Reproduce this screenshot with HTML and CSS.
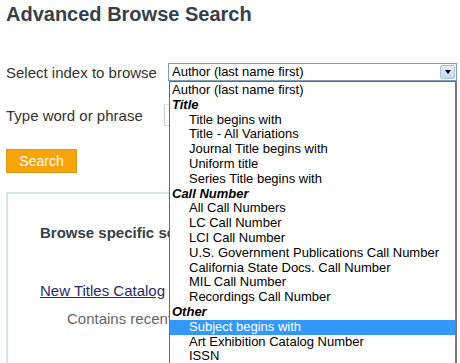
FILE: index.html
```html
<!DOCTYPE html>
<html lang="en">
<head>
    <meta charset="UTF-8">
    <title>Advanced Browse Search</title>
    <link rel="stylesheet" href="styles.css">
</head>
<body>
    <div class="page">
        <h1 class="page-title">Advanced Browse Search</h1>

        <form class="browse-form">
            <div class="form-row row-index">
                <label class="form-label">Select index to browse</label>
                <div class="select">
                    <div class="select-value">Author (last name first)</div>
                    <div class="select-arrow"><span></span></div>

                    <!-- Lista aberta do select -->
                    <ul class="select-list">
                        <li class="opt top">Author (last name first)</li>
                        <li class="group">Title</li>
                        <li class="opt">Title begins with</li>
                        <li class="opt">Title - All Variations</li>
                        <li class="opt">Journal Title begins with</li>
                        <li class="opt">Uniform title</li>
                        <li class="opt">Series Title begins with</li>
                        <li class="group">Call Number</li>
                        <li class="opt">All Call Numbers</li>
                        <li class="opt">LC Call Number</li>
                        <li class="opt">LCI Call Number</li>
                        <li class="opt">U.S. Government Publications Call Number</li>
                        <li class="opt">California State Docs. Call Number</li>
                        <li class="opt">MIL Call Number</li>
                        <li class="opt">Recordings Call Number</li>
                        <li class="group">Other</li>
                        <li class="opt selected">Subject begins with</li>
                        <li class="opt">Art Exhibition Catalog Number</li>
                        <li class="opt">ISSN</li>
                    </ul>
                </div>
            </div>

            <div class="form-row row-phrase">
                <label class="form-label">Type word or phrase</label>
                <input type="text" class="phrase-input">
            </div>

            <button type="button" class="search-btn">Search</button>
        </form>

        <div class="browse-box">
            <h2 class="box-title">Browse specific sets</h2>
            <a href="#" class="box-link">New Titles Catalog</a>
            <p class="box-desc">Contains recent titles</p>
        </div>
    </div>
</body>
</html>
```

FILE: styles.css
```css
body {
    margin: 0;
    padding: 0;
    font-family: 'Liberation Sans', Arial, sans-serif;
    color: #333;
    background: #fff;
    overflow: hidden;
}
.page {
    padding-left: 6px;
}
.page-title {
    margin: 2px 0 0;
    font-size: 20px;
    line-height: 24px;
    font-weight: bold;
    color: #36404c;
}
.browse-form {
    margin-top: 37px;
}
.form-row {
    display: flex;
    align-items: center;
}
.form-label {
    width: 162px;
    font-size: 15px;
    color: #333;
}
.row-phrase {
    margin-top: 23px;
}
.row-phrase .form-label {
    width: 158px;
}
.select {
    position: relative;
    width: 287px;
    height: 16px;
    border: 1px solid #7f9db9;
    background: #fff;
    display: flex;
    font-size: 13px;
}
.select-value {
    flex: 1;
    line-height: 16px;
    padding-left: 3px;
    color: #000;
}
.select-arrow {
    width: 15px;
    margin: 1px;
    border: 1px solid #a9c0da;
    border-radius: 2px;
    background: linear-gradient(#e6eefa, #c4d8f0);
    display: flex;
    justify-content: center;
    align-items: center;
    box-sizing: border-box;
    height: 14px;
}
.select-arrow span {
    width: 0;
    height: 0;
    border-left: 3.5px solid transparent;
    border-right: 3.5px solid transparent;
    border-top: 4px solid #000;
}
/* lista aberta por cima do conteudo */
.select-list {
    position: absolute;
    top: 17px;
    left: 0;
    width: 288px;
    height: 282px;
    overflow: hidden;
    margin: 0;
    padding: 1px 0 0;
    list-style: none;
    background: #fff;
    border: 1px solid #6b6b6b;
    border-bottom: none;
    border-right-width: 2px;
    border-right-color: #7a7a7a;
    box-sizing: border-box;
    z-index: 10;
}
.select-list li {
    line-height: 14.8px;
    height: 14.8px;
    font-size: 13px;
    color: #000;
    white-space: nowrap;
}
.select-list .group {
    padding-left: 2px;
    font-weight: bold;
    font-style: italic;
}
.select-list .opt {
    padding-left: 19px;
}
.select-list .opt.top {
    padding-left: 2px;
}
.select-list .selected {
    background: #3399ff;
    color: #fff;
}
.phrase-input {
    width: 200px;
    height: 22px;
    border: 1px solid #ccc;
    border-top-color: #e4e4e4;
    box-sizing: border-box;
    padding: 0;
}
.search-btn {
    display: block;
    margin-top: 23px;
    width: 71px;
    height: 24px;
    padding: 0;
    background: #f7a30b;
    border: 1px solid #e39a0e;
    color: #fff;
    font-family: 'Liberation Sans', Arial, sans-serif;
    font-size: 14px;
}
.browse-box {
    margin-top: 19px;
    width: 448px;
    height: 171px;
    border: 2px solid #d8e6e8;
    border-bottom: none;
    box-sizing: border-box;
    padding: 29px 0 0 32px;
}
.box-title {
    margin: 0;
    font-size: 15px;
    line-height: 20px;
    font-weight: bold;
    color: #36404c;
}
.box-link {
    display: inline-block;
    margin-top: 39px;
    font-size: 15px;
    line-height: 17px;
    color: #2a2a6a;
}
.box-desc {
    margin: 10px 0 0 27px;
    font-size: 15px;
    line-height: 17px;
    color: #666;
}
```
